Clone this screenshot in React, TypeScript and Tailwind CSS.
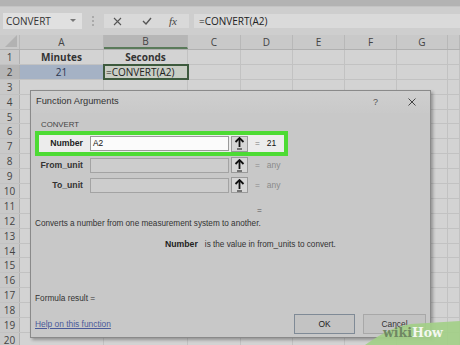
import React from "react";

const cols = ["A", "B", "C", "D", "E", "F", "G", ""];

function ArrowBtn() {
  return (
    <div className="w-[17px] h-[16px] bg-[#d6d6d6] border border-[#9a9a9a] flex items-center justify-center">
      <svg width="11" height="13" viewBox="0 0 11 13">
        <path d="M5.5 1 L5.5 10" stroke="#111" strokeWidth="1.8" />
        <path d="M1.5 5 L5.5 1 L9.5 5" stroke="#111" strokeWidth="1.8" fill="none" />
        <path d="M3 12 L8 12" stroke="#111" strokeWidth="1" />
      </svg>
    </div>
  );
}

export default function App() {
  const rows = Array.from({ length: 20 }, (_, i) => i + 1);
  return (
    <div
      className="relative w-[460px] h-[345px] overflow-hidden bg-[#d3d3d3] text-[#2a2a2a]"
      style={{ fontFamily: '"Open Sans", "Noto Sans", sans-serif' }}
    >
      {/* top band */}
      <div className="h-[7px] bg-[#b3b3b3] border-b border-[#c4c4c4]" />
      {/* formula bar */}
      <div className="h-[28px] bg-[#cecece] flex items-center">
        <div className="ml-[3px] w-[79px] h-[16px] bg-[#e0e0e0] flex items-center pl-[3px] text-[10px] text-[#333] leading-none">
          <span>CONVERT</span>
          <svg className="ml-auto mr-[6px]" width="6" height="4" viewBox="0 0 6 4">
            <path d="M0 0 L6 0 L3 3 Z" fill="#777" />
          </svg>
        </div>
        <div className="ml-[10px] flex flex-col gap-[2px]">
          <div className="w-[2px] h-[2px] bg-[#aaa]" />
          <div className="w-[2px] h-[2px] bg-[#aaa]" />
          <div className="w-[2px] h-[2px] bg-[#aaa]" />
        </div>
        <div className="ml-[10px] w-[85px] h-[14px] bg-[#d9d9d9] flex items-center text-[#444]">
          <svg className="ml-[9px]" width="9" height="9" viewBox="0 0 9 9">
            <path d="M1 1 L8 8 M8 1 L1 8" stroke="#555" strokeWidth="1.1" />
          </svg>
          <svg className="ml-[20px]" width="10" height="8" viewBox="0 0 10 8">
            <path d="M1 4 L4 7 L9 1" stroke="#555" strokeWidth="1.4" fill="none" />
          </svg>
          <span className="ml-[17px] text-[11px] italic leading-none" style={{ fontFamily: '"Liberation Serif", serif' }}>
            fx
          </span>
        </div>
        <div className="ml-[5px] flex-1 h-[14px] bg-[#dadada] flex items-center pl-[5px] text-[10px] text-[#222] leading-none">
          =CONVERT(A2)
        </div>
      </div>
      {/* column headers */}
      <div className="grid grid-cols-[20px_84px_84px_53px_52px_52px_52px_51px_1fr] h-[15px] bg-[#c9c9c9] border-b border-[#b0b0b0]">
        <div className="relative border-r border-[#b8b8b8]">
          <svg className="absolute right-[2px] bottom-[2px]" width="12" height="12" viewBox="0 0 12 12">
            <path d="M12 0 L12 12 L0 12 Z" fill="#b2b2b2" />
          </svg>
        </div>
        {cols.map((c, i) => (
          <div
            key={i}
            className={`flex items-center justify-center text-[10px] leading-none text-[#444] border-r border-[#b8b8b8] ${
              c === "B" ? "bg-[#b6b6b6] border-b-2 border-b-[#5a7a5a]" : ""
            }`}
          >
            {c}
          </div>
        ))}
      </div>
      {/* rows */}
      {rows.map((r) => (
        <div
          key={r}
          className="grid grid-cols-[20px_84px_84px_53px_52px_52px_52px_51px_1fr] h-[14.9px] border-b border-[#c2c2c2]"
        >
          <div
            className={`flex items-center justify-center text-[10px] leading-none text-[#444] border-r border-[#b0b0b0] ${
              r === 2 ? "bg-[#b6b6b6]" : "bg-[#c9c9c9]"
            }`}
          >
            {r}
          </div>
          {cols.map((c, i) => {
            let cls = "border-r border-[#c2c2c2] flex items-center text-[10px] leading-none";
            let content: React.ReactNode = null;
            if (r === 1 && c === "A") {
              cls += " justify-center font-bold text-[#333]";
              content = "Minutes";
            } else if (r === 1 && c === "B") {
              cls += " justify-center font-bold text-[#333]";
              content = "Seconds";
            } else if (r === 2 && c === "A") {
              cls += " justify-center bg-[#a5b2c5] text-[#2b3550]";
              content = "21";
            } else if (r === 2 && c === "B") {
              cls += " bg-[#c9cec5] outline outline-2 outline-[#3d5a3d] -outline-offset-1 pl-[2px] text-[#222]";
              content = "=CONVERT(A2)";
            }
            return (
              <div key={i} className={cls}>
                {content}
              </div>
            );
          })}
        </div>
      ))}

      {/* dialog */}
      <div
        className="absolute left-[30px] top-[90px] w-[401px] h-[248px] bg-[#c8c8c8] border border-[#8a8a8a] shadow-[2px_2px_3px_rgba(0,0,0,0.3)] flex flex-col text-[#2a2a2a]"
        style={{ fontFamily: '"Liberation Sans", Arial, sans-serif' }}
      >
        <div className="h-[22px] flex items-center pl-[5px] bg-gradient-to-b from-[#cfcfcf] to-[#c9c9c9]">
          <span className="text-[9.3px] leading-none text-[#333]">Function Arguments</span>
          <span className="ml-auto text-[9px] leading-none text-[#555]">?</span>
          <svg className="ml-[30px] mr-[14px]" width="8" height="8" viewBox="0 0 8 8">
            <path d="M0.5 0.5 L7.5 7.5 M7.5 0.5 L0.5 7.5" stroke="#444" strokeWidth="1" />
          </svg>
        </div>
        <div className="h-[13px] mt-[5px] pl-[10px] text-[7.8px] leading-[13px] text-[#444]">CONVERT</div>
        <div className="ml-[4px] w-[253px] h-[25px] border-4 border-[#4ddb34] bg-[#ececec] flex items-center">
          <div className="w-[44px] text-right text-[8.7px] font-bold leading-none text-[#222]">Number</div>
          <div className="ml-[7px] w-[139px] h-[15px] bg-[#fbfbfb] border border-[#9a9a9a] flex items-center pl-[2px] text-[8.3px] leading-none text-[#111]">
            A2
          </div>
          <div className="ml-[2px]">
            <ArrowBtn />
          </div>
          <span className="ml-[7px] text-[8.3px] leading-none text-[#777]">=</span>
          <span className="ml-[7px] text-[8.5px] leading-none text-[#111]">21</span>
        </div>
        {["From_unit", "To_unit"].map((l, i) => (
          <div key={l} className={`h-[18px] ${i === 1 ? "mt-[2px]" : ""} pl-[8px] flex items-center`}>
            <div className="w-[44px] text-right text-[8.7px] font-bold leading-none text-[#333] whitespace-nowrap">
              {l}
            </div>
            <div className="ml-[7px] w-[139px] h-[15px] bg-[#cdcdcd] border border-[#a3a3a3]" />
            <div className="ml-[2px]">
              <ArrowBtn />
            </div>
            <span className="ml-[7px] text-[8.3px] leading-none text-[#888]">=</span>
            <span className="ml-[7px] text-[8.5px] leading-none text-[#8a8a8a]">any</span>
          </div>
        ))}
        <div className="h-[14px] mt-[9px] pl-[226px] text-[8.3px] leading-[14px] text-[#555]">=</div>
        <div className="h-[13px] pl-[4px] text-[8.2px] leading-[13px] text-[#333] whitespace-nowrap">
          Converts a number from one measurement system to another.
        </div>
        <div className="h-[13px] mt-[8px] pl-[134px] text-[8.2px] leading-[13px] text-[#333] whitespace-nowrap">
          <span className="font-bold text-[8.7px] text-[#222]">Number</span>
          <span className="ml-[7px]">is the value in from_units to convert.</span>
        </div>
        <div className="h-[13px] mt-[41px] pl-[4px] text-[8.3px] leading-[13px] text-[#333]">Formula result =</div>
        <div className="h-[20px] mt-[9px] pl-[4px] flex items-center">
          <span className="text-[8.4px] leading-none text-[#4a5a9a] underline">Help on this function</span>
          <div className="ml-auto w-[61px] h-[20px] border border-[#7f8a96] bg-[#c3c3c3] flex items-center justify-center text-[8.4px] leading-none text-[#222]">
            OK
          </div>
          <div className="ml-[8px] mr-[4px] w-[63px] h-[20px] border border-[#a8a8a8] bg-[#c3c3c3] flex items-center justify-center text-[8.4px] leading-none text-[#333]">
            Cancel
          </div>
        </div>
      </div>

      {/* wikiHow watermark */}
      <div className="absolute right-0 bottom-0 w-[95px] h-[24px]">
        <svg className="absolute inset-0" width="95" height="24" viewBox="0 0 95 24">
          <path d="M0 24 C10 17 26 6 46 3 L95 0 L95 24 Z" fill="#a3cf88" fillOpacity="0.92" />
        </svg>
        <div
          className="absolute left-[18px] top-[6px] text-[12.5px] font-bold leading-none whitespace-nowrap"
          style={{ fontFamily: '"DejaVu Serif", "Liberation Serif", serif' }}
        >
          <span className="text-[#6f8763]">wiki</span>
          <span className="text-[#f4f8f0]">How</span>
        </div>
      </div>
    </div>
  );
}
